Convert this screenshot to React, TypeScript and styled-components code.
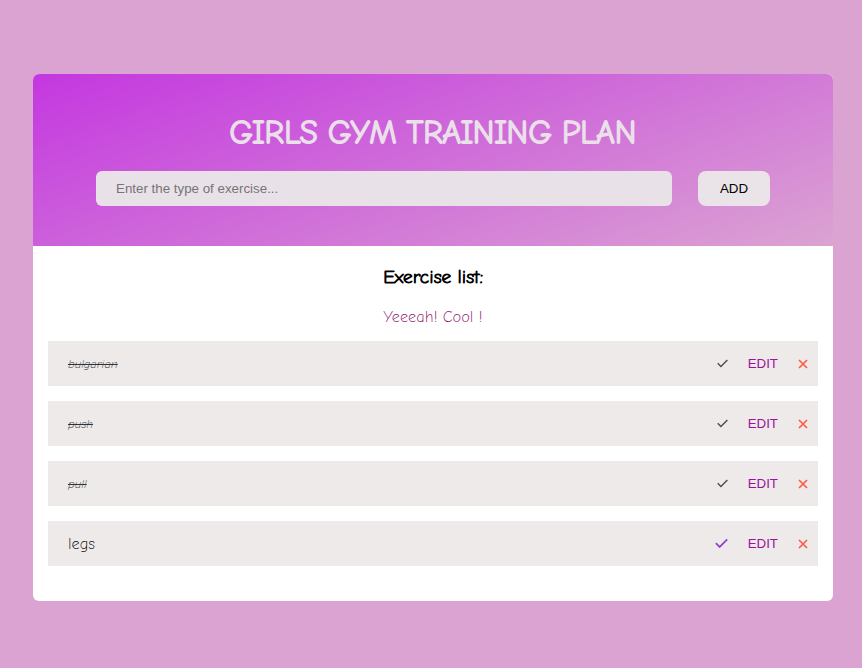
import React, { useState } from "react";
import styled, { createGlobalStyle } from "styled-components";

const GlobalStyle = createGlobalStyle`
  * { box-sizing: border-box; }
  body {
    margin: 0;
    background: #dba3d2;
    font-family: "Comic Neue", cursive;
    font-weight: 300;
  }
  button, input { font-family: "Liberation Sans", Arial, sans-serif; }
`;

const Page = styled.main`
  min-height: 100vh;
  display: grid;
  place-items: center;
  padding: 74px 29px 67px 33px;
`;

const Card = styled.section`
  width: 100%;
  max-width: 800px;
  border-radius: 6px;
  overflow: hidden;
  background: #fff;
`;

const Header = styled.header`
  padding: 39px 63px 40px;
  background: linear-gradient(160deg, #c437e0, #dba3d2);
`;

const Title = styled.h1`
  margin: 0 0 18px;
  font-size: 32px;
  line-height: 40px;
  font-weight: 300;
  -webkit-text-stroke: 2px;
  text-align: center;
  text-transform: uppercase;
  color: #ebe0ea;
`;

const Form = styled.form`
  display: flex;
  gap: 26px;
`;

const ExerciseInput = styled.input`
  flex: 1;
  min-width: 0;
  height: 35px;
  padding: 0 20px;
  border: 0;
  border-radius: 6px;
  background: #e9e1e8;

  &::placeholder { color: #757575; }
`;

const AddButton = styled.button`
  width: 72px;
  height: 35px;
  padding: 0;
  border: 0;
  border-radius: 8px;
  background: #eae3e7;
  color: #000;
  cursor: pointer;
`;

const Body = styled.div`
  padding: 20px 15px 35px;
`;

const Heading = styled.h2`
  margin: 0 0 19px;
  font-size: 19px;
  line-height: 22px;
  font-weight: 300;
  -webkit-text-stroke: 1px;
  text-align: center;
`;

const Message = styled.p`
  margin: 0 0 14px;
  font-size: 16px;
  line-height: 20px;
  text-align: center;
  color: #8a1268;
`;

const List = styled.ul`
  display: grid;
  gap: 15px;
  margin: 0;
  padding: 0;
  list-style: none;
`;

const Row = styled.li`
  display: flex;
  align-items: center;
  gap: 20px;
  height: 45px;
  padding: 0 10px 0 20px;
  background: #edeae9;
`;

const Name = styled.span<{ $done: boolean }>`
  flex: 1;
  font-size: ${(p) => (p.$done ? "12px" : "16px")};
  font-style: ${(p) => (p.$done ? "italic" : "normal")};
  text-decoration: ${(p) => (p.$done ? "line-through" : "none")};
  color: ${(p) => (p.$done ? "#30323a" : "#000")};
`;

const Action = styled.button<{ $color: string }>`
  display: flex;
  align-items: center;
  padding: 0;
  border: 0;
  background: none;
  color: ${(p) => p.$color};
  line-height: 16px;
  cursor: pointer;
`;

function CheckIcon({ size }: { size: number }) {
  return (
    <svg width={size} height={size} viewBox="0 0 12 12" fill="none" stroke="currentColor" strokeWidth="1.6" aria-hidden="true">
      <path d="M0.8 5.7 4.3 9.2 11.3 2.2" />
    </svg>
  );
}

function CrossIcon() {
  return (
    <svg width="10" height="10" viewBox="0 0 10 10" fill="none" stroke="currentColor" strokeWidth="1.7" aria-hidden="true">
      <path d="M1 1 9 9M9 1 1 9" />
    </svg>
  );
}

const initial = [
  { name: "bulgarian", done: true },
  { name: "push", done: true },
  { name: "pull", done: true },
  { name: "legs", done: false },
];

export default function App() {
  const [items, setItems] = useState(initial);
  const [draft, setDraft] = useState("");

  const add = (event: React.FormEvent) => {
    event.preventDefault();
    if (draft.trim()) {
      setItems([...items, { name: draft.trim(), done: false }]);
      setDraft("");
    }
  };

  const toggle = (index: number) =>
    setItems(items.map((item, i) => (i === index ? { ...item, done: !item.done } : item)));

  const remove = (index: number) => setItems(items.filter((_, i) => i !== index));

  const edit = (index: number) => {
    setDraft(items[index].name);
    remove(index);
  };

  return (
    <Page>
      <GlobalStyle />
      <Card>
        <Header>
          <Title>Girls gym training plan</Title>
          <Form onSubmit={add}>
            <ExerciseInput
              aria-label="Type of exercise"
              placeholder="Enter the type of exercise..."
              value={draft}
              onChange={(event) => setDraft(event.target.value)}
            />
            <AddButton type="submit">ADD</AddButton>
          </Form>
        </Header>
        <Body>
          <Heading>Exercise list:</Heading>
          <Message>Yeeeah! Cool !</Message>
          <List>
            {items.map((item, index) => (
              <Row key={index}>
                <Name $done={item.done}>{item.name}</Name>
                <Action $color={item.done ? "#4a4e57" : "#8f45d0"} aria-label="Toggle done" onClick={() => toggle(index)}>
                  <CheckIcon size={item.done ? 11 : 13} />
                </Action>
                <Action $color="#9c129f" onClick={() => edit(index)}>EDIT</Action>
                <Action $color="#fa5c46" aria-label="Delete" onClick={() => remove(index)}>
                  <CrossIcon />
                </Action>
              </Row>
            ))}
          </List>
        </Body>
      </Card>
    </Page>
  );
}
